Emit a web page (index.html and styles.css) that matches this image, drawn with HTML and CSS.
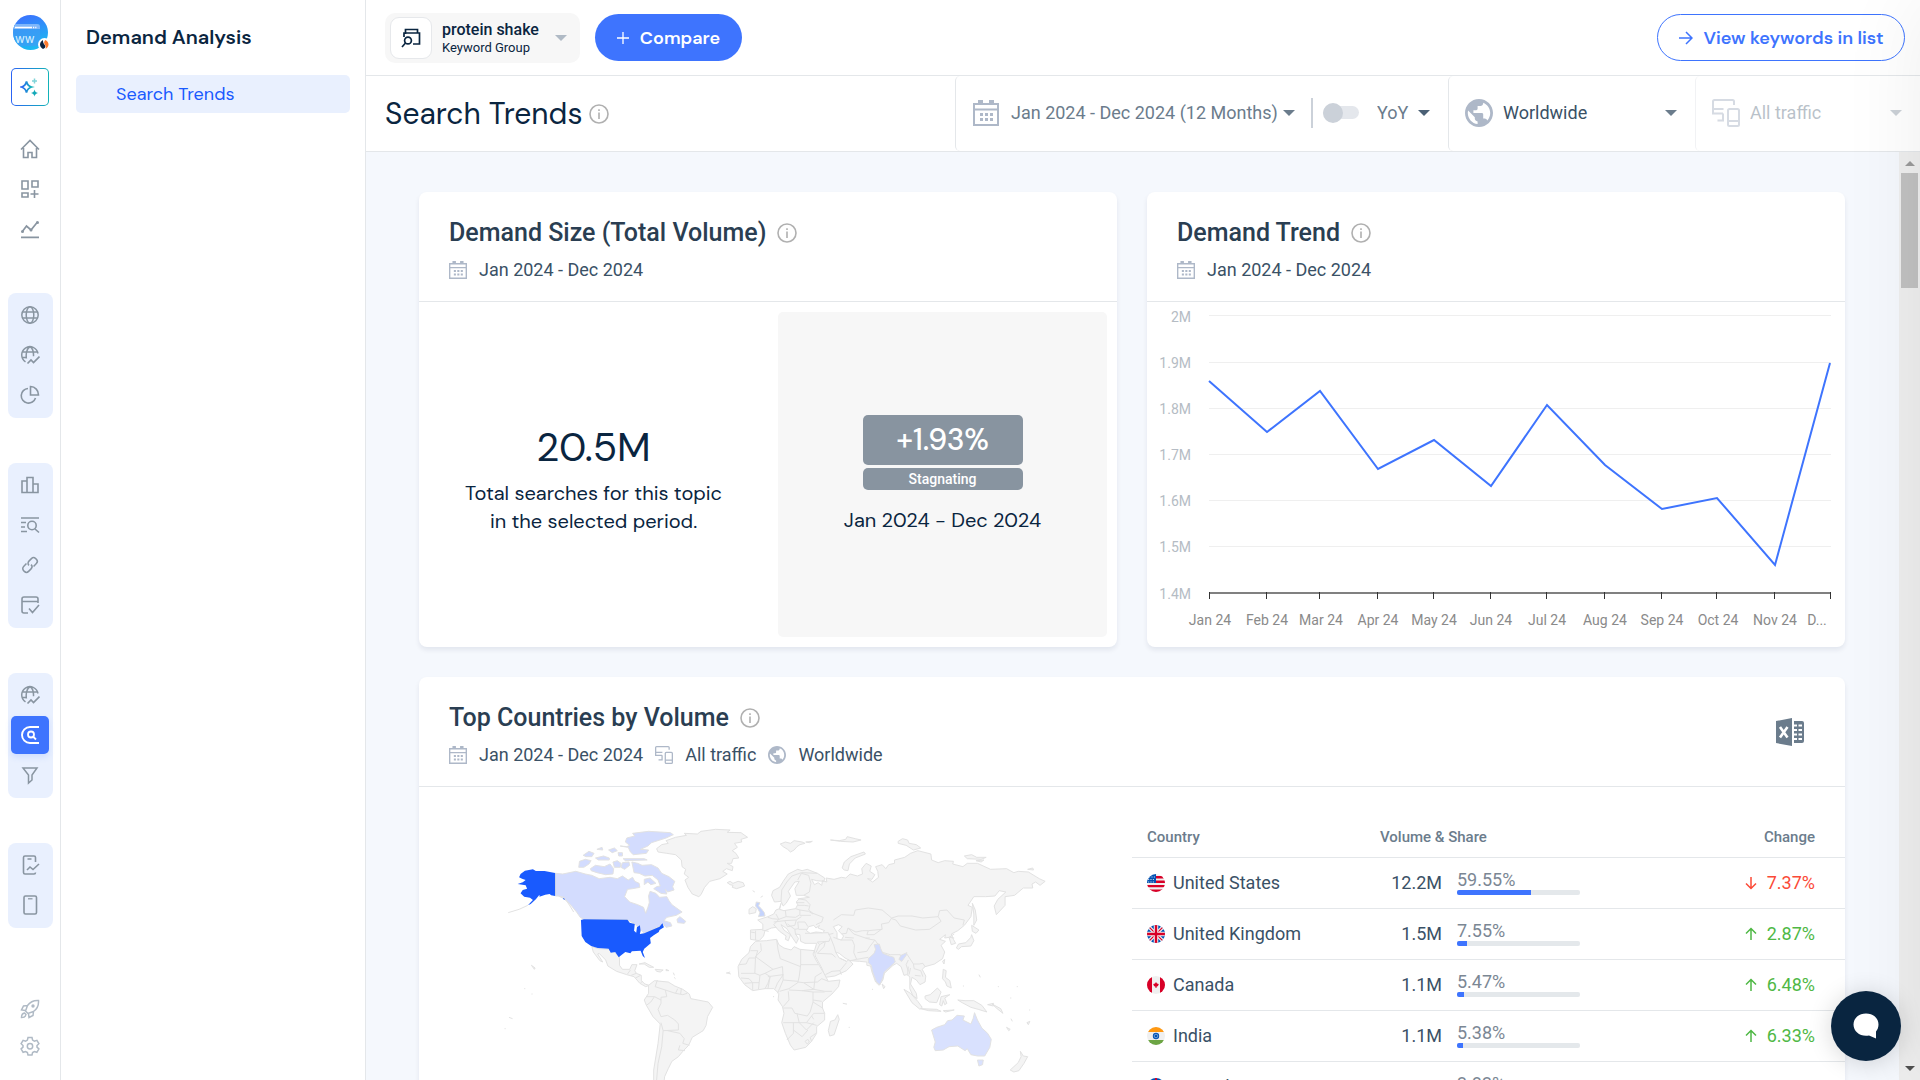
FILE: index.html
```html
<!DOCTYPE html>
<html lang="en">
<head>
  <meta charset="UTF-8" />
  <meta name="viewport" content="width=device-width, initial-scale=1.0" />
  <title>Search Trends</title>
  <link rel="stylesheet" href="styles.css">
</head>
<body>
  <!-- Shared icons -->
  <svg class="sprite" aria-hidden="true">
    <symbol id="i-info" viewBox="0 0 20 20"><circle cx="10" cy="10" r="9" fill="none" stroke="currentColor" stroke-width="1.6"/><path d="M9.2 8.6h1.6V15H9.2zM9.2 5.2h1.6v1.7H9.2z" fill="currentColor"/></symbol>
    <symbol id="i-calendar" viewBox="0 0 26 26"><path d="M1 4h24v21H1zM1 9.500h24" fill="none" stroke="currentColor" stroke-width="2"/><path d="M5 0h5v4H5zM16 0h5v4h-5zM7 13h3v3H7zm5 0h3v3h-3zm5 0h3v3h-3zM7 18h3v3H7zm5 0h3v3h-3zm5 0h3v3h-3z" fill="currentColor"/></symbol>
    <symbol id="i-world" viewBox="2 2 20 20"><path fill="currentColor" d="M12 2C6.480 2 2 6.480 2 12s4.480 10 10 10 10-4.480 10-10S17.520 2 12 2zm-1 17.930c-3.950-.49-7-3.850-7-7.930 0-.62.080-1.210.210-1.790L9 15v1c0 1.100.9 2 2 2v1.930zm6.900-2.540c-.26-.81-1-1.390-1.900-1.390h-1v-3c0-.55-.45-1-1-1H8v-2h2c.55 0 1-.45 1-1V7h2c1.100 0 2-.9 2-2v-.41c2.930 1.190 5 4.060 5 7.410 0 2.080-.8 3.970-2.100 5.390z"/></symbol>
    <symbol id="i-traffic" viewBox="0 0 28 28"><path d="M22 6V2.500Q22 1 20.500 1H2.500Q1 1 1 2.500v12h10M1 10h10.500M11 14.500v7H5.500" fill="none" stroke="currentColor" stroke-width="2"/><rect x="16" y="10" width="11" height="17" rx="1.500" fill="none" stroke="currentColor" stroke-width="2"/><path d="M16 22h11" stroke="currentColor" stroke-width="2"/></symbol>
    <symbol id="i-globe" viewBox="0 0 20 20"><g fill="none" stroke="currentColor" stroke-width="1.500"><circle cx="10" cy="10" r="8.200"/><ellipse cx="10" cy="10" rx="3.800" ry="8.200"/><path d="M2.500 7h15M2.500 13h15"/></g></symbol>
    <symbol id="i-globe-trend" viewBox="0 0 20 20"><g fill="none" stroke="currentColor" stroke-width="1.500"><path d="M5.500 16.800A8.200 8.200 0 1 1 18 8.500M6.500 13.500C5.500 9 7 3 10 1.800c2.500 1.200 3.700 5 3.500 9.500M2.500 7h15M2 12.500h5"/><path d="M7.500 18.500l3.500-3.500 2.500 2.500 6-6" stroke-width="1.700"/></g></symbol>
    <symbol id="i-up" viewBox="0 0 12 14"><path d="M6 13V2M1 6.500L6 1.500l5 5" fill="none" stroke="currentColor" stroke-width="1.500"/></symbol>
  </svg>

  <div class="app">
    <nav class="rail">
      <svg class="logo" viewBox="0 0 40 40" role="img" aria-label="Workspace">
        <defs><linearGradient id="lg" x1="0" y1="0" x2="0.300" y2="1"><stop offset="0" stop-color="#3e6cff"/><stop offset="1" stop-color="#1cb9f2"/></linearGradient>
        <clipPath id="lc"><circle cx="17.500" cy="17.500" r="17.500"/></clipPath></defs>
        <g clip-path="url(#lc)">
          <rect width="36" height="36" fill="url(#lg)"/>
          <rect x="-2" y="9" width="29" height="22" rx="2" fill="#3f9ef3" opacity=".7"/>
          <path d="M0 9h24q3 0 3 3v2H0z" fill="#7fb6fa"/>
          <path d="M2 12.500h17" stroke="#fff" stroke-width="1.500"/><path d="M20 12.500h4" stroke="#fff" stroke-width="1.500" stroke-dasharray="1 .8"/>
          <text x="2" y="28" font-size="12" fill="#d9f1ff" font-family="Inter, sans-serif">ww</text>
        </g>
        <circle cx="31.500" cy="29.500" r="6.500" fill="#fff"/>
        <path d="M30 25c-4 2-4 7 0 9 3-1 3-3 1-5-1-1-1-3-1-4z" fill="#0c2340"/><path d="M32.500 25c4 2 4 7 0 9 1-2 0-3-1-5s0-3 1-4z" fill="#ff7a2d"/>
      </svg>
      <button class="ai" aria-label="AI assistant">
        <svg width="20" height="20" viewBox="0 0 20 20"><defs><linearGradient id="ag"><stop offset="0" stop-color="#2b63f5"/><stop offset="1" stop-color="#12b3b8"/></linearGradient></defs><path d="M6.500 4.500Q7.500 9 11.500 10 7.500 11.200 6.500 15.500 5.500 11.200 1.500 10 5.500 9 6.500 4.500z" fill="none" stroke="url(#ag)" stroke-width="1.800"/><path d="M14.500 12.500q.5 3 3.500 3.500-3 .5-3.500 3.500-.5-3-3.500-3.500 3-.5 3.500-3.500z" fill="#12a8b8"/><path d="M14.500 1.500v5M12 4h5" stroke="#7fd3d8" stroke-width="1.500"/></svg>
      </button>

      <div class="rail-top">
        <a href="#" aria-label="Home"><svg viewBox="0 0 20 20"><path d="M1 10.500L10 1.500l9 9M3.500 9v9.500h4.500v-5h4v5h4.500V9" fill="none" stroke="currentColor" stroke-width="1.600"/></svg></a>
        <a href="#" aria-label="Dashboards"><svg viewBox="0 0 20 20"><path d="M2 2h6v8H2zM12 2h6v6h-6zM2 14h6v4H2zM14.500 11v8M10.500 15h8" fill="none" stroke="currentColor" stroke-width="1.600"/></svg></a>
        <a href="#" aria-label="Trends"><svg viewBox="0 0 20 20"><path d="M2 13l4.500-6 4.500 4 6.500-8M1 18.300h18" fill="none" stroke="currentColor" stroke-width="1.700"/><circle cx="2.500" cy="12.500" r="1.500" fill="currentColor"/><circle cx="11" cy="11" r="1.500" fill="currentColor"/><circle cx="17.500" cy="3.500" r="1.500" fill="currentColor"/></svg></a>
      </div>
      <div class="rail-group">
        <a href="#" aria-label="Websites"><svg><use href="#i-globe"/></svg></a>
        <a href="#" aria-label="Website performance"><svg><use href="#i-globe-trend"/></svg></a>
        <a href="#" aria-label="Market share"><svg viewBox="0 0 20 20"><path d="M8 3.500A7.300 7.300 0 1 0 15.500 13M10.500 1.500V10h8A8.200 8.200 0 0 0 10.500 1.500z" fill="none" stroke="currentColor" stroke-width="1.600"/></svg></a>
      </div>
      <div class="rail-group">
        <a href="#" aria-label="Benchmark"><svg viewBox="0 0 20 20"><path d="M2 6h5v11.500H2zM7 2.500h6v15H7zM13 9h5v8.500h-5z" fill="none" stroke="currentColor" stroke-width="1.600"/></svg></a>
        <a href="#" aria-label="Keyword research"><svg viewBox="0 0 20 20"><path d="M1 3h18M1 7.500h5M1 12h4M1 16.500h6M15 14l4 3.500" fill="none" stroke="currentColor" stroke-width="1.600"/><circle cx="12" cy="10.500" r="4.200" fill="none" stroke="currentColor" stroke-width="1.600"/></svg></a>
        <a href="#" aria-label="Backlinks"><svg viewBox="0 0 20 20"><g transform="rotate(-45 10 10)" fill="none" stroke="currentColor" stroke-width="1.500"><path d="M8.500 6.500H4.500a3 3 0 0 0-3 3v1a3 3 0 0 0 3 3H8a3 3 0 0 0 3-3"/><path d="M11.500 13.500h4a3 3 0 0 0 3-3v-1a3 3 0 0 0-3-3H12a3 3 0 0 0-3 3"/></g></svg></a>
        <a href="#" aria-label="Rank tracker"><svg viewBox="0 0 20 20"><path d="M8 18H4q-2 0-2-2V4q0-2 2-2h12q2 0 2 2v4M2 6.500h16M9 13.500l3.500 4 6.500-7.500" fill="none" stroke="currentColor" stroke-width="1.600"/></svg></a>
      </div>
      <div class="rail-group">
        <a href="#" aria-label="Market analysis"><svg><use href="#i-globe-trend"/></svg></a>
        <a href="#" class="active" aria-label="Demand Analysis"><svg viewBox="0 0 20 20"><path d="M19 2h-9a8 8 0 0 0 0 16h9" fill="none" stroke="currentColor" stroke-width="1.900"/><circle cx="11" cy="9.500" r="3" fill="none" stroke="currentColor" stroke-width="1.800"/><path d="M13 11.500l3 3" stroke="currentColor" stroke-width="1.800"/></svg></a>
        <a href="#" aria-label="Conversion"><svg viewBox="0 0 20 20"><path d="M3 3h14l-5 7v5l-3.500 3v-8z" fill="none" stroke="currentColor" stroke-width="1.500"/></svg></a>
      </div>
      <div class="rail-group">
        <a href="#" aria-label="App performance"><svg viewBox="0 0 20 20"><path d="M15.500 7V2.500Q15.500 1 14 1H5Q3.500 1 3.500 2.500v15Q3.500 19 5 19h9q1.500 0 1.500-1.500M7.500 4h4" fill="none" stroke="currentColor" stroke-width="1.600"/><path d="M7 15l3-3 3 2.500 6-5.500" fill="none" stroke="currentColor" stroke-width="1.600"/></svg></a>
        <a href="#" aria-label="Apps"><svg viewBox="0 0 20 20"><rect x="4" y="1" width="12.500" height="18" rx="1.500" fill="none" stroke="currentColor" stroke-width="1.600"/><path d="M8 3.800h4.500" stroke="currentColor" stroke-width="1.200"/></svg></a>
      </div>
      <div class="rail-bottom">
        <a href="#" aria-label="What's new"><svg viewBox="0 0 20 20"><path d="M18.500 1.500q-7-.5-11 5l-2 5.500 2.500 2.500 5.500-2q5.500-4 5-11zM7.500 6.500l-4 .5L1.500 11l4 .5M13.500 12.500l-.5 4-4 2-.5-4M4.500 14Q1.500 14.500 1.500 18.500 5.500 18.500 6 15.500z" fill="none" stroke="currentColor" stroke-width="1.500"/><circle cx="13" cy="7" r="1.700" fill="currentColor"/></svg></a>
        <a href="#" aria-label="Settings"><svg viewBox="0 0 20 20"><path d="M8 1.500h4l.6 2.600 1.800 1 2.500-.8 2 3.400-1.900 1.800v1.600l1.900 1.800-2 3.400-2.500-.8-1.800 1-.6 2.500H8l-.6-2.500-1.800-1-2.500.8-2-3.400L3 11.100V9.500L1.100 7.700l2-3.400 2.500.8 1.800-1z" fill="none" stroke="currentColor" stroke-width="1.500"/><circle cx="10" cy="10.200" r="2.700" fill="none" stroke="currentColor" stroke-width="1.500"/></svg></a>
      </div>
    </nav>

    <aside class="side">
      <h2>Demand Analysis</h2>
      <a href="#" class="side-link">Search Trends</a>
    </aside>

    <div class="main">
      <header class="topbar">
        <button class="keyword">
          <span class="keyword-icon"><svg width="20" height="20" viewBox="0 0 20 20"><path d="M4.500 6V1.500h12V5M3 9V5h15.500v11H12" fill="none" stroke="#0a2540" stroke-width="1.700"/><circle cx="7" cy="12.500" r="3.400" fill="none" stroke="#0a2540" stroke-width="1.700"/><path d="M4.500 15L1 19" stroke="#0a2540" stroke-width="1.700"/></svg></span>
          <span class="keyword-text"><strong>protein shake</strong><small>Keyword Group</small></span>
          <span class="caret light"></span>
        </button>
        <button class="pill solid"><svg width="12" height="12" viewBox="0 0 12 12"><path d="M6 0v12M0 6h12" stroke="currentColor" stroke-width="1.300"/></svg>Compare</button>
        <button class="pill outline"><svg width="14" height="14" viewBox="0 0 14 14"><path d="M0 7h13M7 1l6 6-6 6" fill="none" stroke="currentColor" stroke-width="1.500"/></svg>View keywords in list</button>
      </header>

      <div class="filters">
        <div class="filters-title">
          <h1>Search Trends</h1>
          <svg class="info"><use href="#i-info"/></svg>
        </div>
        <div class="filter dates">
          <svg class="filter-icon"><use href="#i-calendar"/></svg>
          <button class="range">Jan 2024 - Dec 2024 (12 Months)<span class="caret"></span></button>
          <span class="divider"></span>
          <input type="checkbox" class="toggle" id="yoy" aria-label="Compare periods">
          <select class="yoy" aria-label="Comparison"><option>YoY</option></select>
          <span class="caret dark"></span>
        </div>
        <div class="filter country">
          <svg class="filter-icon"><use href="#i-world"/></svg>
          <select aria-label="Country"><option>Worldwide</option></select>
          <span class="caret"></span>
        </div>
        <div class="filter traffic">
          <svg class="filter-icon"><use href="#i-traffic"/></svg>
          <select aria-label="Traffic" disabled><option>All traffic</option></select>
          <span class="caret"></span>
        </div>
      </div>

      <div class="viewport">
        <main class="content">
          <div class="row">
            <section class="card">
              <div class="card-head">
                <div class="card-title">
                  <h3>Demand Size (Total Volume) <svg class="info"><use href="#i-info"/></svg></h3>
                  <p class="meta"><svg><use href="#i-calendar"/></svg>Jan 2024 - Dec 2024</p>
                </div>
              </div>
              <div class="size">
                <div class="size-total">
                  <div class="big">20.5M</div>
                  <p>Total searches for this topic<br>in the selected period.</p>
                </div>
                <div class="size-change">
                  <div class="badge">+1.93%</div>
                  <div class="badge-label">Stagnating</div>
                  <p>Jan 2024 - Dec 2024</p>
                </div>
              </div>
            </section>

            <section class="card">
              <div class="card-head">
                <div class="card-title">
                  <h3>Demand Trend <svg class="info"><use href="#i-info"/></svg></h3>
                  <p class="meta"><svg><use href="#i-calendar"/></svg>Jan 2024 - Dec 2024</p>
                </div>
              </div>
              <svg class="chart" viewBox="0 0 698 345">
                <path class="grid" d="M62 13.500H684M62 60.500H684M62 106.500H684M62 152.500H684M62 198.500H684M62 244.500H684"/>
                <path class="axis" d="M62 291H684"/>
                <path class="ticks" d="M62.500 290v7M119.500 290v7M172.500 290v7M230.500 290v7M286.500 290v7M343.500 290v7M399.500 290v7M457.500 290v7M514.500 290v7M569.500 290v7M627.500 290v7M683.500 290v7"/>
                <g class="ylabels">
                  <text x="44" y="20">2M</text><text x="44" y="66">1.9M</text><text x="44" y="112">1.8M</text><text x="44" y="158">1.7M</text><text x="44" y="204">1.6M</text><text x="44" y="250">1.5M</text><text x="44" y="297">1.4M</text>
                </g>
                <g class="xlabels">
                  <text x="63" y="323">Jan 24</text><text x="120" y="323">Feb 24</text><text x="174" y="323">Mar 24</text><text x="231" y="323">Apr 24</text><text x="287" y="323">May 24</text><text x="344" y="323">Jun 24</text><text x="400" y="323">Jul 24</text><text x="458" y="323">Aug 24</text><text x="515" y="323">Sep 24</text><text x="571" y="323">Oct 24</text><text x="628" y="323">Nov 24</text><text x="670" y="323">D...</text>
                </g>
                <path class="line" d="M62 79L120 130 173 89 231 167 287 138 344 184 400 103 458 163 515 207 570 196 628 263 683 61"/>
              </svg>
            </section>
          </div>

          <section class="card">
            <div class="card-head">
              <div class="card-title">
                <h3>Top Countries by Volume <svg class="info"><use href="#i-info"/></svg></h3>
                <p class="meta"><svg><use href="#i-calendar"/></svg>Jan 2024 - Dec 2024<svg><use href="#i-traffic"/></svg>All traffic<svg><use href="#i-world"/></svg>Worldwide</p>
              </div>
              <button class="excel" aria-label="Download Excel"><svg width="28" height="28" viewBox="0 0 28 28"><path d="M0 3L16 0v28L0 25z" fill="#6b7c8c"/><path d="M18 3h8q2 0 2 2v18q0 2-2 2h-8v-3h3v-2h-3v-2.500h3v-2h-3V13h3v-2h-3V8.500h3v-2h-3z" fill="#6b7c8c"/><path d="M22.500 6.500H26v2h-3.500zm0 4.500H26v2h-3.500zm0 4.500H26v2h-3.500zm0 4.500H26v2h-3.500z" fill="#fff"/><path d="M4 9l7.500 10.500M11.500 9L4 19.500" stroke="#fff" stroke-width="2.600"/></svg></button>
            </div>
            <div class="countries">
              <div class="map">
                <svg viewBox="0 0 1568 960" preserveAspectRatio="none">
                  <g class="land">
                    <!-- Greenland, Iceland, Svalbard and the Russian arctic -->
                    <path d="M458 146L472 134 490 130 484 122 510 112 540 106 534 100 570 102 580 94 620 88 660 90 652 97 690 98 708 112 690 118 692 126 672 130 680 142 666 152 676 160 684 174 668 176 664 190 652 190 668 200 666 212 650 206 640 214 652 222 632 236 604 244 590 262 580 284 574 290 556 282 544 262 536 240 546 232 534 222 538 208 528 200 526 180 510 164 486 160 462 156z"/>
                    <path d="M652 248l8-4 8 6 14-6 14 4 4 10-22 8-12-4 2-6-8-2z"/>
                    <path d="M798 132l14-6 14 4 10-8 22 4 8 4-14 4-8 6-8 10-10 6-8-8-12-8zM868 126l18-2-8 4zM936 120l24 2 18-4 4-8 22 6 16 4-22 6-34-2zM1122 124l12-8 14 4 4 10 20 4 12 10-20 6-20-14-22-6zM968 204l6-18 18-16 36-14 4 6-28 12-16 18-4 20-10-2zM1304 168l20-4 14 8 26 0-14 6-38-2zM1336 182l22-2-8 6zM1478 208l14-4 2 6z"/>
                    <!-- Eurasia -->
                    <path d="M774 286L778 272 796 262 806 244 820 222 846 208 858 212 872 208 900 220 920 234 918 244 898 242 884 238 892 254 902 248 912 256 914 242 926 246 924 234 946 238 966 232 978 234 990 222 1010 228 1024 222 1022 206 1034 190 1048 198 1044 214 1058 224 1050 238 1038 236 1052 246 1068 232 1066 214 1060 200 1078 194 1088 206 1096 194 1112 190 1112 180 1140 172 1156 160 1176 152 1212 162 1214 180 1232 188 1250 182 1274 184 1272 192 1300 200 1312 190 1340 190 1376 208 1420 206 1440 218 1452 214 1480 216 1510 236 1526 244 1512 256 1500 246 1490 252 1492 264 1466 264 1442 286 1416 290 1416 316 1392 344 1386 318 1396 298 1418 276 1400 272 1388 288 1362 290 1330 290 1314 316 1326 322 1322 350 1304 376 1286 392 1268 402 1274 418 1280 430 1268 434 1262 412 1250 414 1252 404 1236 418 1252 424 1240 436 1250 456 1244 476 1222 492 1196 500 1188 508 1198 528 1196 546 1182 554 1172 540 1160 532 1156 552 1172 580 1174 596 1162 586 1154 566 1154 530 1146 524 1138 526 1130 500 1118 490 1108 496 1084 520 1080 540 1070 556 1060 546 1050 516 1046 498 1036 496 1036 486 1016 484 990 482 976 474 960 460 950 456 960 474 980 484 986 480 998 492 980 512 948 528 922 532 912 504 894 468 892 452 898 430 866 430 854 424 852 404 840 402 848 416 842 430 832 414 816 386 800 374 808 390 826 404 820 422 812 418 814 408 796 394 786 382 774 384 756 392 752 408 740 422 716 418 716 390 750 388 750 372 736 360 764 350 780 342 786 330 796 326 800 310 796 328 808 332 840 326 846 314 842 306 850 296 878 292 862 286 842 286 838 266 850 244 838 246 820 274 826 288 814 310 806 318 800 304 782 306z"/>
                    <!-- Ireland, Japan, Sakhalin -->
                    <path d="M712 328l10-8 10 6-2 12-18 4zM1326 310l8 20 4 30-8 16 0-34zM1324 376l20 14-8 10-10-6zM1324 404l6 18-8 16-26 2-8 8-6-4 6-12 20-4 14-16zM1244 484l6-6-2 14z"/>
                    <!-- South-east Asia and Oceania -->
                    <path d="M1138 568l18 12 20 24 12 18-6 6-22-20zM1184 626l44 2 12 6-34-2zM1246 632l30-2-24 6zM1196 588l14-4 20-20 10 12-12 32-20-2-12-10zM1240 590l24-6-14 10 6 16-6 4-4-12-4 16-6-4zM1246 508l8 4-2 20 12 10 4 22-12-6-4-12-8-10zM1286 600l20 2 24 0 22 14 14 20-24-8-20-6-24-14zM1368 614l16-4 0 8zM1380 612l24 14 6 14-16-14zM1420 682l10 6-4 4zM1432 656l4 8M1476 668l8-4-4 10z"/>
                    <path d="M1458 754l8 14 12 2-10 20-14 22-14 4-10-6 22-22 8-18z"/>
                    <!-- Africa and Madagascar -->
                    <path d="M730 424L760 422 788 418 794 434 808 444 828 450 836 440 852 448 892 452 888 462 896 480 906 498 918 520 930 544 962 540 958 560 940 582 914 606 914 624 920 640 920 660 898 680 898 700 884 724 868 742 836 750 826 736 812 700 802 668 808 640 804 620 792 600 794 580 780 566 756 566 722 572 700 554 684 530 682 500 692 478 712 458 716 440z"/>
                    <path d="M956 644l4 14-14 46-12 4-4-16 6-28 12-4z"/>
                    <!-- Mexico, Central America, Caribbean -->
                    <path d="M280 440L298 446 326 448 344 458 356 472 356 496 364 508 384 508 390 494 404 494 398 512 402 520 416 526 416 542 426 552 438 556 428 560 412 550 396 530 376 524 348 514 324 498 318 480 300 460 296 462 310 486 302 482 284 456z"/>
                    <path d="M410 492l16-4 24 14-12 0-14-10zM454 508l22 2-8 6-10-2zM484 508l8 4-8 0zM504 518l3 8M506 532l4 4M114 496l10 8-2 4z"/>
                    <!-- South America -->
                    <path d="M436 556L452 542 470 544 490 546 508 558 530 568 548 582 552 596 600 606 612 622 598 650 594 676 586 692 556 712 546 736 530 754 518 770 500 784 490 806 480 830 476 870 488 900 466 886 450 840 450 810 462 730 468 672 448 650 430 616 424 600 436 580z"/>
                  </g>

                  <g class="borders">
                    <!-- Europe -->
                    <path d="M800 304L802 270 816 246 830 228 856 218M846 240L856 220 876 226 882 250 878 276 862 286M856 218L900 220M846 296L868 300 880 314 876 330 888 340 916 352 912 366 896 374M842 308L864 308M846 316L864 316 876 318M812 332L814 350 794 358 786 342M840 326L852 330 852 344 840 352 814 350M852 330L876 334 888 342M852 346L882 346M794 358L776 356 764 352M794 358L780 374 788 384M780 366L810 362 842 360 856 350M810 362L818 380 838 376 842 360M818 372L838 388 848 386 846 366 866 366 874 380M838 388L840 404M848 388L872 388M730 392L730 420M716 396L728 398M748 390L766 394"/>
                    <!-- Middle East -->
                    <path d="M866 400L930 398 936 412 932 424 900 426M930 404L944 400M936 412L946 440 950 456M900 426L906 434 896 458M906 434L922 424M922 424L918 440 900 460 940 462 950 472M922 524L940 514 962 512 980 488M962 512L966 524M962 474L980 484M944 412L966 420 996 420 1002 436 1000 458 1008 478 990 482"/>
                    <!-- Central Asia -->
                    <path d="M944 360L966 344 1000 346 1004 330 1040 324 1078 330 1104 354 1096 368 1076 372 1078 388 1040 392 1024 392 1006 396 984 384 980 400 964 402M984 384L1000 402 1032 414 1044 414M1040 392L1036 404 1056 404 1076 388M976 412L1000 414M1032 414L1044 418 1058 420 1044 440 1036 454 1010 458M1058 420L1066 432M1104 354L1122 348 1160 348 1190 354 1232 350 1240 364 1208 388 1170 390 1128 378 1116 360 1104 356M1232 350L1236 332 1256 330 1276 354 1304 360 1300 376M1008 478L1040 472M1076 456L1100 464 1128 464M1146 462L1164 492 1180 492 1190 490 1196 500M1150 500L1148 524M1164 492L1166 506 1184 512 1190 530M1156 504L1152 524M1168 526L1184 528M1128 464L1130 484M1150 480L1144 494 1150 514M1262 412L1276 402M1264 412L1276 414"/>
                    <!-- Africa -->
                    <path d="M716 452L736 452 730 474 712 474 704 492 684 494M744 430L746 452 730 470 778 508 804 500M788 420L792 450 798 476 854 500M854 450V494H902M854 494L850 530 846 548M804 500L806 540 846 544M730 470L728 520 690 520M728 520L742 526 756 520 778 508M690 534L712 536 722 548 740 548 742 526M700 550L722 548 722 570M740 548L738 568M756 520L770 530 764 550 756 566M764 530L806 524M770 530L764 566M806 524L790 550 784 566M806 540L796 566 790 580M796 574L822 566 846 548M822 570L858 572 890 568 862 548 846 546M862 548L900 546 912 536 930 544M912 518L894 530 890 568M890 568L920 574 940 574M820 574L822 600 806 620M806 624L830 624 838 640 872 648 880 636M858 572L888 576 888 606 880 636M888 576H920M888 606L914 624M912 604L888 600M806 668L850 668 844 640M850 668L870 668 884 648 890 640 920 640M884 648L890 658M850 668L870 690 890 668M870 668L898 676M834 668L834 700 816 720M834 690L858 710 874 690M896 700L880 712 884 724M866 724l8-6 4 8-6 6z"/>
                    <!-- Americas -->
                    <path d="M460 540L454 560 482 570 486 590 470 592 470 610 462 628M430 590L452 590 470 600M430 616L442 606 452 590M482 570L510 580 516 566M510 580L530 584 542 580M526 566L524 582M462 628L470 650 488 646 508 660 518 672 518 690 476 692 470 668M476 692L472 740 462 790 458 840M488 692L522 700 534 716 530 730 548 736M522 736L518 750 536 752M378 522L386 510M388 526L402 520M400 534L414 526M414 548L420 544"/>
                    <path d="M660 516l-10 4M970 610l10 2"/>
                  </g>

                  <g class="land canada">
                    <path d="M180 220L200 222 236 214 262 222 280 226 300 236 330 232 350 236 364 228 380 240 392 232 398 244 410 250 412 262 392 266 378 268 370 290 384 306 406 314 422 322 428 340 434 322 438 308 436 288 440 274 456 280 466 292 486 290 492 302 500 314 528 336 512 346 486 352 478 362 496 368 500 378 484 382 476 372 450 388 424 400 398 372 378 359 258 358 248 352 238 336 226 320 214 306 200 294 188 288 180 288z"/>
                    <path d="M514 358l8-8 16 14-4 6-18-2zM424 238l16-4 6 6 10 10-14 4-8-8-10 8z"/>
                    <path d="M246 184l16-6 16 4-6 10-14 10-14 0zM276 206l14-10 24 4 16-8 10 14-2 16-20 2-24-6-16-6zM338 186l12-4 10 8-2 12-16 0zM364 188l18-2 2 10-14 12-10-6zM256 166l16-12 14 6-6 10-16 0zM290 174l22-6 16 6 0 6-30 0zM294 148l14-6 2 8zM326 150l16-6 8 8-14 6zM352 158l12 0 0 10-10 0zM366 176l58 0 8 4-60 2zM358 138l22 4 6 14 8 8 36-4 6-10-22-2 20-10 10-10 40-14 20-10-8-6-60-4-44 6 6 8-22 6-4 12 12 10-8 4zM390 186l16 4 12 6 26-2 18 10 10 16 20 10 16 14-6 16 4 10-18 6-6-8 4 14-16-2-20-14 8-6 10-2-6-18-16-14-20 2-16-8-14-2z"/>
                  </g>
                  <path class="land usa" d="M80 232L84 222 96 212 118 208 126 213 150 213 179 219V288L168 286 164 282 152 284 136 290 136 284 126 298 112 312 104 316 118 300 110 293 94 290 84 280 90 270 102 266 98 256 76 252 90 247 98 240 88 236zM250 360L258 358 378 359 384 368 398 372 396 392 402 398 404 382 412 376 414 392 412 402 424 400 450 388 466 380 474 370 478 382 466 390 464 396 450 406 440 414 442 430 424 446 420 456 426 474 420 468 414 452 390 454 386 460 372 456 358 468 354 472 344 456 332 458 326 446 296 444 278 438 262 426 252 408zM200 294l6 2-2 4z"/>
                  <path class="borders" d="M104 316L80 328 50 338M188 288L204 292 220 318 230 336"/>
                  <path class="land uk" d="M732 306l10 2-4 10 8 8 8 12 2 10-18 2 4-12-6-12-6-8z"/>
                  <path class="land canada" d="M1056 434l14-2 4 14 6 14 18 8 12 4 4 14-30 30-4 18-8 20-10-8-10-30-4-20-8-8 0-12 16-16 4-12zM1130 466l16-8-2 8-12 18-8-6z"/>
                  <path class="land" d="M1078 552l8 8-4 6z"/>
                  <path class="land australia" d="M1214 690L1228 682 1250 674 1258 662 1270 660 1284 646 1304 648 1300 660 1322 672 1328 656 1332 638 1340 660 1352 684 1368 700 1378 718 1374 742 1360 768 1340 768 1322 764 1312 746 1306 752 1286 738 1262 740 1246 750 1224 752 1220 742 1224 726zM1340 780l16 0-2 14-10 4z"/>
                  <!-- Black Sea, Caspian -->
                  <path class="sea" d="M870 392L876 380 890 376 896 384 906 376 902 384 920 392 914 398 896 396 880 400zM944 380L958 374 968 380 958 392 972 408 966 420 954 416 954 398z"/>
                  <path class="borders" d="M40 686h3M52 652l10 4M94 566h3M114 582h3M650 518l12 4M1300 558h3M1344 524l4 8M1396 560h3M1448 560h3M1430 594h3M1482 630h3M986 682h3M978 612h3M1050 568h3M778 590h3M722 272l6 4M744 292l6-4"/>
                </svg>
              </div>
              <table>
                <thead>
                  <tr><th class="c-name">Country</th><th class="c-share" colspan="2">Volume &amp; Share</th><th class="c-change">Change</th></tr>
                </thead>
                <tbody>
                  <tr>
                    <td class="c-name"><span class="name"><svg class="flag" viewBox="0 0 18 18"><g clip-path="url(#fc)"><path fill="#f0f0f0" d="M0 0h18v18H0z"/><path fill="#d80027" d="M8 2h10v2.500H8zM8 6.500h10v2.500H8zM0 11h18v2.300H0zM0 15.600h18V18H0z"/><path fill="#0052b4" d="M0 0h9v9H0z"/><path d="M2 3h6M1 5.500h7M1 8h7" stroke="#f0f0f0" stroke-width=".8" stroke-dasharray="1.200 1.200"/></g></svg>United States</span></td>
                    <td class="c-vol">12.2M</td>
                    <td class="c-bar"><span class="pct">59.55%</span><span class="bar"><i style="width:60%"></i></span></td>
                    <td class="c-change down"><span><svg><use href="#i-up"/></svg>7.37%</span></td>
                  </tr>
                  <tr>
                    <td class="c-name"><span class="name"><svg class="flag" viewBox="0 0 18 18"><g clip-path="url(#fc)"><path fill="#0052b4" d="M0 0h18v18H0z"/><path d="M0 0l18 18M18 0L0 18" stroke="#f0f0f0" stroke-width="3.500"/><path d="M0 0l18 18M18 0L0 18" stroke="#d80027" stroke-width="1.200"/><path d="M9 0v18M0 9h18" stroke="#f0f0f0" stroke-width="4.500"/><path d="M9 0v18M0 9h18" stroke="#d80027" stroke-width="2.400"/></g></svg>United Kingdom</span></td>
                    <td class="c-vol">1.5M</td>
                    <td class="c-bar"><span class="pct">7.55%</span><span class="bar"><i style="width:8%"></i></span></td>
                    <td class="c-change up"><span><svg><use href="#i-up"/></svg>2.87%</span></td>
                  </tr>
                  <tr>
                    <td class="c-name"><span class="name"><svg class="flag" viewBox="0 0 18 18"><g clip-path="url(#fc)"><path fill="#f0f0f0" d="M0 0h18v18H0z"/><path fill="#d80027" d="M0 0h5v18H0zM13 0h5v18h-5zM9 6l1 1.500 1.800.5L11 10l-1.500.7V12h-1v-1.300L7 10l-.8-2L8 7.500z"/></g></svg>Canada</span></td>
                    <td class="c-vol">1.1M</td>
                    <td class="c-bar"><span class="pct">5.47%</span><span class="bar"><i style="width:6%"></i></span></td>
                    <td class="c-change up"><span><svg><use href="#i-up"/></svg>6.48%</span></td>
                  </tr>
                  <tr>
                    <td class="c-name"><span class="name"><svg class="flag" viewBox="0 0 18 18"><g clip-path="url(#fc)"><path fill="#f0f0f0" d="M0 0h18v18H0z"/><path fill="#ff9811" d="M0 0h18v5H0z"/><path fill="#6da544" d="M0 13h18v5H0z"/><circle cx="9" cy="9" r="3.200" fill="#0052b4"/><circle cx="9" cy="9" r="1.800" fill="none" stroke="#9cc0e8" stroke-width=".7"/></g></svg>India</span></td>
                    <td class="c-vol">1.1M</td>
                    <td class="c-bar"><span class="pct">5.38%</span><span class="bar"><i style="width:5%"></i></span></td>
                    <td class="c-change up"><span><svg><use href="#i-up"/></svg>6.33%</span></td>
                  </tr>
                  <tr>
                    <td class="c-name"><span class="name"><svg class="flag" viewBox="0 0 18 18"><defs><clipPath id="fc"><circle cx="9" cy="9" r="9"/></clipPath></defs><g clip-path="url(#fc)"><path fill="#0052b4" d="M0 0h18v18H0z"/><path d="M0 0l9 9M9 0v9M0 4.500h9" stroke="#d80027" stroke-width="2"/></g></svg>Australia</span></td>
                    <td class="c-vol">783K</td>
                    <td class="c-bar"><span class="pct">3.83%</span><span class="bar"><i style="width:4%"></i></span></td>
                    <td class="c-change down"><span><svg><use href="#i-up"/></svg>5.90%</span></td>
                  </tr>
                </tbody>
              </table>
            </div>
          </section>
        </main>
        <div class="scrollbar"><span class="arrow-up"></span><span class="thumb"></span><span class="arrow-down"></span></div>
      </div>
    </div>
  </div>

  <div class="drawer"></div>
  <button class="chat" aria-label="Open chat"><svg width="26" height="26" viewBox="0 0 26 26"><path d="M13 .5C20 .5 25.500 5 25.500 11.500c0 3-1 5-2.500 7V25.500l-7-3c-1 .2-2 .3-3 .3C6 22.800.5 18 .5 11.500S6 .5 13 .5z" fill="#fff"/></svg></button>
</body>
</html>
```
FILE: styles.css
```css
* {
  margin: 0;
  padding: 0;
  box-sizing: border-box;
}

body {
  font-family: Roboto, sans-serif;
  font-size: 18px;
  color: #3a5166;
  background: #fff;
  height: 100vh;
  overflow: hidden;
}

button,
select {
  font: inherit;
  color: inherit;
  background: none;
  border: none;
  cursor: pointer;
}

select {
  appearance: none;
  outline: none;
}

a {
  color: inherit;
  text-decoration: none;
}

.sprite {
  position: absolute;
  width: 0;
  height: 0;
}

.app {
  display: flex;
  height: 100vh;
}

/* Icon rail */
.rail {
  width: 61px;
  flex-shrink: 0;
  display: flex;
  flex-direction: column;
  align-items: center;
  padding: 15px 0 16px;
  border-right: 1px solid #e4e7ea;
  color: #8995a1;
}

.logo {
  width: 40px;
  height: 40px;
  margin-left: 6px;
  flex-shrink: 0;
}

.ai {
  width: 38px;
  height: 38px;
  flex-shrink: 0;
  margin: 13px 0 23px;
  display: flex;
  align-items: center;
  justify-content: center;
  border: 1px solid transparent;
  border-radius: 5px;
  background: linear-gradient(#fff, #fff) padding-box, linear-gradient(90deg, #2b63f5, #12b3b8) border-box;
}

.rail-top,
.rail-group {
  display: flex;
  flex-direction: column;
  align-items: center;
  gap: 2px;
}

.rail a {
  display: flex;
  align-items: center;
  justify-content: center;
  width: 38px;
  height: 38px;
}

.rail a svg {
  width: 20px;
  height: 20px;
}

.rail-top {
  padding: 1px 0;
  margin-bottom: 44px;
}

.rail-group {
  width: 45px;
  padding: 3px 0 4px;
  margin-bottom: 45px;
  border-radius: 8px;
  background: #e9f0fe;
}

.rail .active {
  background: #3e74fe;
  color: #fff;
  border-radius: 5px;
  box-shadow: 0 3px 6px rgba(62, 116, 254, 0.15);
}

.rail-bottom {
  margin-top: auto;
  color: #b0bac5;
}

.rail-bottom a {
  height: 37px;
}

/* Side panel */
.side {
  width: 305px;
  flex-shrink: 0;
  padding: 22px 15px;
  border-right: 1px solid #e4e7ea;
  font-family: "DM Sans", Inter, sans-serif;
}

.side h2 {
  padding-left: 10px;
  margin-bottom: 23px;
  font-size: 20px;
  line-height: 30px;
  font-weight: 600;
  font-optical-sizing: none;
  color: #0a2540;
}

.side-link {
  display: block;
  padding-left: 40px;
  line-height: 38px;
  font-size: 18px;
  border-radius: 5px;
  background: #e9f0fe;
  color: #195afe;
}

.main {
  flex: 1;
  min-width: 0;
  display: flex;
  flex-direction: column;
}

/* Top bar */
.topbar {
  display: flex;
  align-items: center;
  height: 76px;
  flex-shrink: 0;
  padding: 0 15px 0 19px;
  border-bottom: 1px solid #e4e7ea;
}

.keyword {
  display: flex;
  align-items: center;
  width: 195px;
  height: 50px;
  padding: 0 13px 0 5px;
  margin-right: 15px;
  border-radius: 10px;
  background: #f7f7f7;
  color: #0a2540;
  text-align: left;
}

.keyword-icon {
  display: flex;
  align-items: center;
  justify-content: center;
  width: 42px;
  height: 42px;
  margin-right: 10px;
  border: 1px solid #e6e8eb;
  border-radius: 9px;
  background: #fff;
}

.keyword-text {
  flex: 1;
  white-space: nowrap;
}

.keyword-text strong {
  display: block;
  font-size: 16px;
  line-height: 19px;
  font-weight: 500;
}

.keyword-text small {
  display: block;
  font-size: 13px;
  line-height: 17px;
}

.pill {
  display: flex;
  align-items: center;
  justify-content: center;
  gap: 11px;
  height: 47px;
  padding: 0 20px;
  border-radius: 24px;
  font-family: "DM Sans", Inter, sans-serif;
  font-size: 18px;
  font-weight: 600;
  white-space: nowrap;
}

.pill.solid {
  min-width: 147px;
  background: #3e74fe;
  color: #fff;
}

.pill.outline {
  min-width: 248px;
  margin-left: auto;
  border: 1px solid #3e74fe;
  color: #3e74fe;
}

.caret {
  flex-shrink: 0;
  width: 0;
  height: 0;
  border: 6px solid transparent;
  border-top-color: #6b7c8c;
  border-bottom: none;
}

.caret.light {
  border-top-color: #b0bac5;
}

.caret.dark {
  border-top-color: #4b6075;
}

/* Filters */
.filters {
  display: flex;
  height: 76px;
  flex-shrink: 0;
  border-bottom: 1px solid #e4e7ea;
}

.filters-title {
  flex: 1;
  display: flex;
  align-items: center;
  gap: 7px;
  padding-left: 19px;
}

.filters-title h1 {
  font-family: "DM Sans", Inter, sans-serif;
  font-size: 30px;
  font-weight: 400;
  font-optical-sizing: none;
  color: #0a2540;
  white-space: nowrap;
}

.info {
  width: 20px;
  height: 20px;
  color: #b0b0b0;
}

.filter {
  display: flex;
  align-items: center;
  padding: 0 18px 2px 16px;
  border-left: 1px solid #e4e7ea;
  border-radius: 5px;
}

.filter-icon {
  width: 28px;
  height: 28px;
  flex-shrink: 0;
  margin-right: 10px;
  color: #aeb8c8;
}

.filter select {
  flex: 1;
  min-width: 0;
}

.dates {
  width: 493px;
  padding-left: 17px;
  color: #6b7c8c;
}

.dates .filter-icon {
  width: 26px;
  height: 26px;
  margin-right: 12px;
}

.range {
  display: flex;
  align-items: center;
  gap: 5px;
  white-space: nowrap;
}

.divider {
  width: 2px;
  height: 30px;
  margin: 0 10px 0 auto;
  background: #cbd1d9;
}

.toggle {
  appearance: none;
  display: flex;
  align-items: center;
  width: 36px;
  height: 13px;
  margin-right: 18px;
  border-radius: 7px;
  background: #e4e7ec;
}

.toggle::before {
  content: "";
  width: 20px;
  height: 20px;
  flex-shrink: 0;
  border-radius: 50%;
  background: #cbd1d9;
}

.filter .yoy {
  flex: none;
  width: 41px;
}

.country {
  width: 247px;
}

.traffic {
  width: 225px;
  border-left-color: #f1f2f4;
}

.traffic > * {
  opacity: 0.35;
}

.traffic .filter-icon {
  opacity: 0.5;
}

/* Scrolling area */
.viewport {
  flex: 1;
  min-height: 0;
  display: flex;
  background: #f5f8fd;
}

.content {
  flex: 1;
  min-width: 0;
  overflow: hidden;
  padding: 40px 54px 0 53px;
}

.scrollbar {
  width: 21px;
  display: flex;
  flex-direction: column;
  align-items: center;
  padding: 9px 0;
  background: #eee;
}

.scrollbar .arrow-up {
  border: 5px solid transparent;
  border-top: none;
  border-bottom-color: #9a9a9a;
}

.scrollbar .thumb {
  width: 17px;
  height: 115px;
  margin-top: 7px;
  background: #c1c1c1;
}

.scrollbar .arrow-down {
  margin-top: auto;
  border: 5px solid transparent;
  border-bottom: none;
  border-top-color: #505050;
}

.row {
  display: flex;
  gap: 30px;
  margin-bottom: 30px;
}

.row .card {
  flex: 1;
  min-width: 0;
}

.card {
  display: flex;
  flex-direction: column;
  border-radius: 8px;
  background: #fff;
  box-shadow: 0 3px 5px rgba(14, 30, 62, 0.08);
}

.card-head {
  display: flex;
  align-items: center;
  justify-content: space-between;
  height: 110px;
  padding: 0 41px 0 30px;
  border-bottom: 1px solid #e4e7ea;
}

.card-title {
  padding-top: 6px;
}

.card h3 {
  display: flex;
  align-items: center;
  gap: 11px;
  font-size: 25px;
  line-height: 32px;
  font-weight: 500;
  color: #2a3e52;
}

.meta {
  display: flex;
  align-items: center;
  gap: 12px;
  margin-top: 8px;
  line-height: 26px;
}

.meta svg {
  width: 18px;
  height: 18px;
  color: #aeb8c8;
}

.size {
  flex: 1;
  display: grid;
  grid-template-columns: 1fr 1fr;
  font-family: "DM Sans", Inter, sans-serif;
  font-size: 20px;
  line-height: 28px;
  color: #0a2540;
  text-align: center;
}

.size-total,
.size-change {
  display: flex;
  flex-direction: column;
  align-items: center;
  justify-content: center;
}

.size-total {
  padding-top: 8px;
}

.size-change {
  margin: 10px;
  border-radius: 5px;
  background: #f7f7f7;
}

.big {
  margin-bottom: 8px;
  font-size: 40px;
  line-height: 48px;
}

.badge,
.badge-label {
  width: 160px;
  border-radius: 5px;
  background: #8894a0;
  color: #fff;
  font-weight: 500;
}

.badge {
  margin-bottom: 3px;
  font-size: 30px;
  line-height: 50px;
}

.badge-label {
  margin-bottom: 16px;
  font-family: Roboto, sans-serif;
  font-size: 14px;
  line-height: 22px;
}

/* Trend chart */
.chart {
  display: block;
  width: 100%;
  font-size: 14px;
}

.chart .grid {
  stroke: #efefef;
}

.chart .axis {
  stroke: #808080;
  stroke-width: 2;
}

.chart .ticks {
  stroke: #333;
}

.chart .line {
  fill: none;
  stroke: #3e74fe;
  stroke-width: 2;
}

.ylabels {
  fill: #b5bcc4;
  text-anchor: end;
}

.xlabels {
  fill: #8a8a8a;
  text-anchor: middle;
}

/* Countries */
.excel svg {
  display: block;
}

.countries {
  display: flex;
  align-items: flex-start;
}

.map {
  flex: 1;
  padding-top: 13px;
}

.map svg {
  display: block;
  width: 80%;
  height: 320px;
  margin: 0 auto;
}

.map path {
  vector-effect: non-scaling-stroke;
}

.land,
.borders {
  stroke: #e2e2e2;
}

.land {
  fill: #f4f4f4;
}

.borders {
  fill: none;
}

.map .usa {
  fill: #195afe;
  stroke: none;
}

.map .canada {
  fill: #d3dcfe;
}

.map .uk {
  fill: #c4d3fd;
}

.map .australia {
  fill: #d9e1fe;
}

.map .sea {
  fill: #fff;
  stroke: #e2e2e2;
}

table {
  flex: 1;
  margin-top: 31px;
  border-collapse: collapse;
  table-layout: fixed;
}

th {
  height: 39px;
  font-size: 15px;
  font-weight: 500;
  color: #6b7c8c;
  text-align: left;
  border-bottom: 1px solid #e4e7ea;
}

td {
  height: 51px;
  border-bottom: 1px solid #e4e7ea;
}

.c-name {
  width: 248px;
  padding-left: 15px;
}

.name {
  display: flex;
  align-items: center;
  gap: 8px;
  white-space: nowrap;
}

.flag {
  width: 18px;
  height: 18px;
}

.c-vol {
  width: 62px;
  text-align: right;
}

.c-bar {
  width: 200px;
  padding-left: 15px;
}

.pct {
  display: block;
  line-height: 20px;
  color: #7b8794;
}

.bar {
  display: block;
  width: 123px;
  height: 5px;
  border-radius: 2px;
  background: #e4e8eb;
  overflow: hidden;
}

.bar i {
  display: block;
  height: 100%;
  background: #3e74fe;
}

.c-change {
  padding-right: 30px;
  text-align: right;
}

td.c-change span {
  display: flex;
  align-items: center;
  justify-content: flex-end;
  gap: 10px;
}

.c-change svg {
  width: 12px;
  height: 14px;
}

.down {
  color: #fb4a37;
}

.down svg {
  transform: rotate(180deg);
}

.up {
  color: #4fb845;
}

/* Closed drawer, only its shadow reaches the window */
.drawer {
  position: fixed;
  top: 0;
  right: -400px;
  width: 400px;
  height: 100vh;
  box-shadow: 0 0 80px rgba(0, 0, 0, 0.07);
  pointer-events: none;
}

.chat {
  position: fixed;
  right: 19px;
  bottom: 19px;
  display: flex;
  align-items: center;
  justify-content: center;
  width: 70px;
  height: 70px;
  border-radius: 50%;
  background: #092540;
  box-shadow: 0 2px 24px rgba(0, 0, 0, 0.16);
}
```
